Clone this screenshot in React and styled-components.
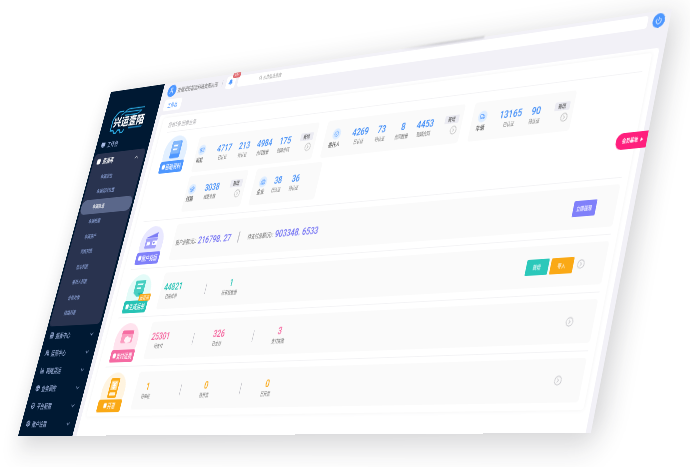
import React, { useEffect, useState } from "react";
import styled, { createGlobalStyle } from "styled-components";
import {
  User, Bell, Power, ChevronUp, ChevronDown, CircleChevronRight, Monitor, Database,
  FileText, Users, Truck, ShieldCheck, Settings, IdCard, Building2, Container, BadgeCheck,
  Search, BarChart3, Package,
} from "lucide-react";

const Global = createGlobalStyle`
  html, body { margin: 0; background: #fff; }
  * { box-sizing: border-box; }
  button, input { font: inherit; border: 0; margin: 0; padding: 0; background: none; color: inherit; }
  button { cursor: pointer; white-space: nowrap; }
  a { color: inherit; text-decoration: none; }
`;

const BOARD_WIDTH = 1900;
const BOARD_HEIGHT = 930;
const BOARD_ZOOM = 0.5;
const SCENE_WIDTH = 690;
const CORNERS = [[111, 92], [672, 9], [591, 433], [18, 436]];

/* Projects the flat board onto the four corners of the tilted plane. */
function projection(corners, scale) {
  const [[x0, y0], [x1, y1], [x2, y2], [x3, y3]] = corners.map(([x, y]) => [x * scale, y * scale]);
  const dx1 = x1 - x2, dx2 = x3 - x2, sx = x0 - x1 + x2 - x3;
  const dy1 = y1 - y2, dy2 = y3 - y2, sy = y0 - y1 + y2 - y3;
  const den = dx1 * dy2 - dx2 * dy1;
  const g = (sx * dy2 - dx2 * sy) / den;
  const h = (dx1 * sy - sx * dy1) / den;
  const w = BOARD_WIDTH * BOARD_ZOOM, t = BOARD_HEIGHT * BOARD_ZOOM;
  const m = [
    (x1 - x0 + g * x1) / w, (y1 - y0 + g * y1) / w, 0, g / w,
    (x3 - x0 + h * x3) / t, (y3 - y0 + h * y3) / t, 0, h / t,
    0, 0, 1, 0,
    x0, y0, 0, 1,
  ];
  return `matrix3d(${m.join(",")})`;
}

const Scene = styled.div`
  width: 100%;
  aspect-ratio: 690 / 467;
  overflow: hidden;
  background: #fff;
`;
const Plane = styled.div`
  width: max-content;
  transform-origin: 0 0;
`;
const Board = styled.div`
  zoom: ${BOARD_ZOOM};
  width: ${BOARD_WIDTH}px;
  height: ${BOARD_HEIGHT}px;
  display: flex;
  position: relative;
  background: #f2f1f7;
  font-family: "Noto Sans CJK SC", "Noto Sans", sans-serif;
  font-size: 14px;
  line-height: 20px;
  color: #666;
  box-shadow: 16px 18px 70px rgba(30, 34, 40, 0.22);
`;

/* Sidebar */
const Sidebar = styled.nav`
  flex: none;
  width: 220px;
  background: #001933;
  color: #a9bce6;
  display: flex;
  flex-direction: column;
`;
const Brand = styled.div`
  height: 129px;
  padding: 48px 0 0 36px;
`;
const MenuItem = styled.button`
  width: 100%;
  height: 46px;
  display: flex;
  align-items: center;
  gap: 8px;
  padding: 0 20px 0 ${(p) => (p.$inset ? 14 : 20)}px;
  font-size: 15px;
  font-weight: ${(p) => (p.$inset ? 700 : 500)};
  color: ${(p) => (p.$inset ? "#fff" : "inherit")};
  svg:last-child:not(:first-child) { margin-left: auto; }
`;
const SubMenu = styled.div`
  margin: 0 8px 2px 6px;
  padding-bottom: 13px;
  border-radius: 12px;
  background: #29334f;
`;
const SubItem = styled.a`
  display: flex;
  align-items: center;
  height: 41px;
  padding-left: 48px;
  border-radius: 18px;
  font-size: 12px;
  font-weight: 500;
  color: ${(p) => (p.$active ? "#fff" : "#8fa6dc")};
  background: ${(p) => (p.$active ? "#5a678a" : "transparent")};
`;

/* Header */
const Main = styled.div`
  flex: 1;
  min-width: 0;
  display: flex;
  flex-direction: column;
  padding: 0 14px 0 16px;
`;
const Header = styled.header`
  height: 44px;
  display: flex;
  align-items: center;
  padding: 0 0 0 3px;
`;
const RoundButton = styled.button`
  flex: none;
  width: 34px;
  height: 34px;
  border-radius: 50%;
  display: grid;
  place-items: center;
  background: #4e97ff;
  color: #fff;
`;
const Company = styled.span`
  margin-left: 7px;
  font-size: 13px;
  color: #666;
  white-space: nowrap;
`;
const HeaderRule = styled.i`
  width: 1px;
  height: 16px;
  margin: 0 15px;
  background: #d4d4dc;
`;
const BellButton = styled.button`
  position: relative;
  flex: none;
  width: 34px;
  height: 34px;
  border-radius: 6px;
  display: grid;
  place-items: center;
  background: #fff;
  color: #4e97ff;
`;
const Badge = styled.span`
  position: absolute;
  top: -8px;
  right: -14px;
  padding: 0 4px;
  border-radius: 4px;
  background: #e0696f;
  color: #fff;
  font-size: 11px;
  line-height: 15px;
`;
const SearchBox = styled.label`
  flex: 1;
  height: 30px;
  margin: 0 14px 0 11px;
  padding-left: 78px;
  border-radius: 8px;
  background: #fff;
  display: flex;
  align-items: center;
  gap: 4px;
  font-size: 11px;
  color: #888;
  input { flex: 1; outline: 0; }
  input::placeholder { color: #888; opacity: 1; }
`;
const Tabs = styled.div`
  height: 44px;
  padding: 2px 0 0 4px;
`;
const Tab = styled.button`
  width: 68px;
  height: 32px;
  border-radius: 8px;
  background: #fff;
  color: #4e97ff;
  font-size: 13px;
  font-weight: 500;
`;

/* Content */
const Content = styled.main`
  flex: 1;
  padding: 10px 18px 0 18px;
  border-radius: 8px 8px 0 0;
  background: #fff;
`;
const Panel = styled.div`
  padding: 0 18px 0 25px;
  border-radius: 8px;
  box-shadow: 0 0 10px rgba(80, 80, 100, 0.07);
`;
const Notice = styled.p`
  margin: 0;
  height: 40px;
  line-height: 40px;
  color: #a5a5aa;
`;
const Section = styled.section`
  display: flex;
  gap: 30px;
  min-height: 126px;
  border-top: 2px solid #f3f3f5;
  padding: ${(p) => (p.$tall ? "24px 0 17px" : "14px 0 16px")};
`;
const Emblem = styled.div`
  flex: none;
  width: 108px;
  margin-top: ${(p) => (p.$tall ? -12 : 0)}px;
  margin-bottom: -12px;
  display: flex;
  flex-direction: column;
  align-items: center;
`;
const Disc = styled.div`
  position: relative;
  width: 88px;
  height: 84px;
  border-radius: 44px 44px 30px 30px;
  display: grid;
  place-items: center;
  padding-bottom: 8px;
  background: ${(p) => p.$tint};
`;
const EmblemLabel = styled.button`
  position: relative;
  width: 90px;
  height: 32px;
  margin-top: -17px;
  display: flex;
  align-items: center;
  justify-content: center;
  gap: 2px;
  border-radius: 6px;
  background: ${(p) => p.$color};
  color: #fff;
  font-size: 15px;
  font-weight: 500;
`;
const Ribbon = styled.span`
  position: absolute;
  z-index: 1;
  right: -6px;
  bottom: 14px;
  padding: 0 3px;
  border-radius: 4px;
  background: #faa819;
  color: #fff;
  font-size: 12px;
  line-height: 18px;
`;
const Cards = styled.div`
  flex: 1;
  display: flex;
  flex-direction: column;
  gap: 9px;
`;
const CardRow = styled.div`
  display: flex;
  gap: 30px;
`;
const Card = styled.article`
  width: ${(p) => p.$width}px;
  height: 94px;
  display: flex;
  align-items: center;
  padding: 0 12px 0 ${(p) => p.$inset}px;
  border-radius: 8px;
  background: #fafafa;
`;
const Lead = styled.div`
  flex: none;
  width: 44px;
  margin-right: ${(p) => p.$gap}px;
  display: flex;
  flex-direction: column;
  align-items: center;
  gap: 1px;
  font-size: 13px;
  color: #333;
  white-space: nowrap;
`;
const LeadIcon = styled.span`
  width: 28px;
  height: 28px;
  border-radius: 50%;
  display: grid;
  place-items: center;
  background: #deedff;
  color: #4e97ff;
`;
const Stat = styled.div`
  flex: none;
  width: ${(p) => p.$width}px;
  text-align: center;
  font-size: 11px;
  line-height: 20px;
  color: #666;
  white-space: nowrap;
`;
const Figure = styled.strong`
  display: block;
  font: 500 24px/28px Roboto, sans-serif;
  color: ${(p) => p.$color};
`;
const CardTools = styled.div`
  margin-left: auto;
  display: flex;
  flex-direction: column;
  align-items: flex-end;
  gap: 6px;
  color: #aaa;
`;
const Tag = styled.button`
  width: 43px;
  height: 20px;
  border-radius: 3px;
  background: #ebebf2;
  color: #444;
  font-size: 11px;
  font-weight: 500;
`;
const Strip = styled.div`
  flex: 1;
  height: 94px;
  display: flex;
  align-items: center;
  padding: 0 57px 0 ${(p) => (p.$inset ? 12 : 0)}px;
  border-radius: 8px;
  background: #fafafa;
`;
const Bar = styled.i`
  width: 3px;
  height: 28px;
  margin: ${(p) => (p.$tight ? "0 32px 0 26px" : "0 43px 0 76px")};
  background: #c4c4ca;
`;
const Amount = styled.div`
  display: flex;
  align-items: center;
  gap: 6px;
  white-space: nowrap;
  font-size: 13px;
`;
const Tools = styled.div`
  margin-left: auto;
  display: flex;
  align-items: center;
  gap: 6px;
  color: #b4b4ba;
`;
const Action = styled.button`
  width: 64px;
  height: 36px;
  border-radius: 3px;
  background: ${(p) => p.$color};
  color: #fff;
  font-size: 11px;
  font-weight: 500;
`;
const IconButton = styled.button`
  display: grid;
  margin-left: 4px;
`;
const SideFlag = styled.button`
  position: absolute;
  right: 0;
  top: 278px;
  width: 86px;
  height: 37px;
  display: flex;
  align-items: center;
  justify-content: center;
  gap: 7px;
  padding-left: 6px;
  border-radius: 18px 0 0 18px;
  background: #ff1f7d;
  color: #fff;
  font-size: 11px;
  font-weight: 700;
`;
const TopShade = styled.i`
  position: absolute;
  left: 1080px;
  top: -3px;
  width: 270px;
  height: 7px;
  background: linear-gradient(90deg, rgba(120, 120, 125, 0), rgba(120, 120, 125, 0.3) 50%, rgba(120, 120, 125, 0.25));
  filter: blur(2px);
`;

const Logo = () => (
  <svg width="150" height="80" viewBox="0 0 150 80" role="img" aria-label="兴运壹陌">
    <g fill="none" stroke="#2aa6dc" strokeWidth="4" strokeLinejoin="round">
      <path d="M18 66H6V40q0-6 5-12l9-10q4-4 9-4h14" />
      <path d="M18 66l5 8h8l5-8h8l5 8h8l5-8" />
      <path d="M36 24q8-2 14-8t14-7h62M46 17h70q-10 9-22 9H50" strokeWidth="3" />
    </g>
    <path d="M78 61h56l-4 4H78z" fill="#1b7fb8" />
    <text x="12" y="55" fill="#fff" fontSize="31" fontWeight="900" fontFamily="'Noto Sans CJK SC', sans-serif">兴运壹陌</text>
  </svg>
);

const LibraryArt = () => (
  <svg width="46" height="52" viewBox="0 0 46 52" aria-hidden="true">
    <path d="M13 2h26q5 0 5 5v33H18V7q0-5-5-5z" fill="#6baaff" />
    <path d="M6 6q0-4 5-4h22q5 0 5 5v41H11q-5 0-5-5z" fill="#82b7fb" />
    <path d="M14 15h16M14 25h16" stroke="#fff" strokeWidth="4" />
    <path d="M6 37h38v8q0 4-5 4H11q-5 0-5-5z" fill="#4e97ff" />
  </svg>
);
const WalletArt = () => (
  <svg width="54" height="46" viewBox="0 0 54 46" aria-hidden="true">
    <path d="M4 14L46 1v13z" fill="#7d7cf5" />
    <path d="M4 15h44v28H9q-5 0-5-5z" fill="#a3a1fa" />
    <path d="M10 25h12v9H10zM31 23h18v11H31z" fill="#fff" />
    <circle cx="37" cy="28" r="3" fill="#7d7cf5" />
  </svg>
);
const WaybillArt = () => (
  <svg width="46" height="50" viewBox="0 0 46 50" aria-hidden="true">
    <path d="M4 2h38v32L30 44H19L4 34z" fill="#48cfc1" />
    <path d="M12 12h22M12 22h16" stroke="#e3fbf8" strokeWidth="4" />
    <path d="M20 34l14 12 8-12z" fill="#23b9ab" />
  </svg>
);
const PayArt = () => (
  <svg width="52" height="46" viewBox="0 0 52 46" aria-hidden="true">
    <rect x="4" y="3" width="44" height="32" rx="5" fill="#fb9cc0" />
    <path d="M4 12V8q0-5 5-5h34q5 0 5 5v4z" fill="#f66ca2" />
    <path d="M18 22l10-5 5 4h9v11l-15 4-9-6z" fill="#fff2f7" />
  </svg>
);
const InvoiceArt = () => (
  <svg width="38" height="54" viewBox="0 0 38 54" aria-hidden="true">
    <rect x="2" y="2" width="34" height="50" rx="4" fill="#faa916" />
    <rect x="7" y="9" width="24" height="23" fill="#ffdf9d" />
    <path d="M13 12l6 7 6-7M19 19v11M13 21h12M13 26h12" fill="none" stroke="#fff" strokeWidth="3" />
    <path d="M8 38h22v8H8z" fill="#fff3d7" />
  </svg>
);
const PlayMark = () => (
  <svg width="7" height="9" viewBox="0 0 7 9" aria-hidden="true"><path d="M0 0l7 4.5L0 9z" fill="#fff" /></svg>
);

const SUB_ITEMS = ["车辆定位", "车辆实时位置", "车辆轨迹", "车辆档案", "车辆资产", "司机列表", "挂车列表", "委托人列表", "合作对象", "线路列表"];
const GROUPS = [
  [FileText, "报表中心"], [Users, "运营中心"], [BarChart3, "网络货运"],
  [Package, "业务调控"], [ShieldCheck, "平台配置"], [Settings, "账户设置"],
];
const CARD_ROWS = [
  [
    { name: "司机", icon: IdCard, width: 438, inset: 0, gap: 27, column: 74, add: true,
      stats: [["4717", "已认证"], ["213", "待认证"], ["4984", "合同数量"], ["175", "到期合同"]] },
    { name: "委托人", icon: BadgeCheck, width: 452, inset: 18, gap: 25, column: 71, add: true,
      stats: [["4269", "已认证"], ["73", "待认证"], ["8", "合同数量"], ["4453", "到期合同"]] },
    { name: "车辆", icon: Truck, width: 304, inset: 10, gap: 27, column: 76, add: true,
      stats: [["13165", "已认证"], ["90", "待认证"]] },
  ],
  [
    { name: "线路", icon: Container, width: 220, inset: 0, gap: 27, column: 52, add: true,
      stats: [["3038", "线路条数"]] },
    { name: "企业", icon: Building2, width: 232, inset: 12, gap: 2, column: 62, add: false,
      stats: [["38", "已认证"], ["36", "待认证"]] },
  ],
];
const BLUE = "#3f8cf7";

function SummaryCard({ card }) {
  const Icon = card.icon;
  return (
    <Card $width={card.width} $inset={card.inset}>
      <Lead $gap={card.gap}>
        <LeadIcon><Icon size={16} strokeWidth={2} /></LeadIcon>
        {card.name}
      </Lead>
      {card.stats.map(([value, label]) => (
        <Stat key={value} $width={card.column}><Figure $color={BLUE}>{value}</Figure>{label}</Stat>
      ))}
      {card.add && (
        <CardTools>
          <Tag>新增</Tag>
          <IconButton aria-label="查看"><CircleChevronRight size={22} strokeWidth={1.5} /></IconButton>
        </CardTools>
      )}
    </Card>
  );
}

function EmblemBlock({ tint, color, label, art, ribbon, tall }) {
  return (
    <Emblem $tall={tall}>
      <Disc $tint={tint}>{art}{ribbon && <Ribbon>{ribbon}</Ribbon>}</Disc>
      <EmblemLabel $color={color}><Database size={14} fill="#fff" strokeWidth={1} />{label}</EmblemLabel>
    </Emblem>
  );
}

function StatStrip({ stats, color, children }) {
  return (
    <Strip>
      {stats.map(([value, label], i) => (
        <React.Fragment key={label}>
          {i > 0 && <Bar />}
          <Stat $width={92}><Figure $color={color}>{value}</Figure>{label}</Stat>
        </React.Fragment>
      ))}
      <Tools>
        {children}
        <IconButton aria-label="查看"><CircleChevronRight size={22} strokeWidth={1.5} /></IconButton>
      </Tools>
    </Strip>
  );
}

function useSceneScale() {
  const read = () => document.documentElement.clientWidth / SCENE_WIDTH;
  const [scale, setScale] = useState(read);
  useEffect(() => {
    const update = () => setScale(read());
    window.addEventListener("resize", update);
    return () => window.removeEventListener("resize", update);
  }, []);
  return scale;
}

export default function App() {
  const scale = useSceneScale();
  return (
    <Scene>
      <Global />
      <Plane style={{ transform: projection(CORNERS, scale) }}>
        <Board>
          <Sidebar>
            <Brand><Logo /></Brand>
            <MenuItem><Monitor size={17} fill="#a9bce6" />工作台</MenuItem>
            <SubMenu>
              <MenuItem $inset><Database size={17} fill="#fff" />资源库<ChevronUp size={20} /></MenuItem>
              {SUB_ITEMS.map((name, i) => <SubItem key={name} href="#" $active={i === 2}>{name}</SubItem>)}
            </SubMenu>
            {GROUPS.map(([Icon, name]) => (
              <MenuItem key={name}><Icon size={17} strokeWidth={3} />{name}<ChevronDown size={20} /></MenuItem>
            ))}
          </Sidebar>
          <Main>
            <Header>
              <RoundButton aria-label="账户"><User size={20} /></RoundButton>
              <Company>安徽消防智运科技有限公司</Company>
              <HeaderRule />
              <BellButton aria-label="消息"><Bell size={17} fill="#4e97ff" /><Badge>99+</Badge></BellButton>
              <SearchBox><Search size={12} /><input aria-label="搜索" placeholder="公告信息查询" /></SearchBox>
              <RoundButton aria-label="退出"><Power size={18} strokeWidth={2.5} /></RoundButton>
            </Header>
            <Tabs><Tab>工作台</Tab></Tabs>
            <Content>
              <Panel>
                <Notice>您有5条 回单业务</Notice>
                <Section $tall>
                  <EmblemBlock tall tint="#e3f0ff" color="#4e97ff" label="基础资料" art={<LibraryArt />} />
                  <Cards>
                    {CARD_ROWS.map((row, i) => (
                      <CardRow key={i}>{row.map((card) => <SummaryCard key={card.name} card={card} />)}</CardRow>
                    ))}
                  </Cards>
                </Section>
                <Section>
                  <EmblemBlock tint="#e9e8ff" color="#8080fa" label="账户充值" art={<WalletArt />} />
                  <Strip $inset>
                    <Amount>账户余额(元): <Figure $color="#7574f4">216798. 27</Figure></Amount>
                    <Bar $tight />
                    <Amount>待支付总额(元): <Figure $color="#7574f4">903348. 6533</Figure></Amount>
                    <Tools><Action $color="#8080fa">立即提现</Action></Tools>
                  </Strip>
                </Section>
                <Section>
                  <EmblemBlock tint="#e3fbf8" color="#27c3b5" label="生成运单" ribbon="运营商" art={<WaybillArt />} />
                  <StatStrip color="#27c3b5" stats={[["44821", "已完成单"], ["1", "待审核数量"]]}>
                    <Action $color="#2bc8ba">新增</Action>
                    <Action $color="#faa916">导入</Action>
                  </StatStrip>
                </Section>
                <Section>
                  <EmblemBlock tint="#ffe3ee" color="#f56ba3" label="支付运费" art={<PayArt />} />
                  <StatStrip color="#f5629c" stats={[["25301", "待支付"], ["326", "已支付"], ["3", "支付失败"]]} />
                </Section>
                <Section>
                  <EmblemBlock tint="#fff4e0" color="#faa916" label="开票" art={<InvoiceArt />} />
                  <StatStrip color="#faa916" stats={[["1", "待审核"], ["0", "待开票"], ["0", "已开票"]]} />
                </Section>
              </Panel>
            </Content>
          </Main>
          <SideFlag>会员基地<PlayMark /></SideFlag>
          <TopShade />
        </Board>
      </Plane>
    </Scene>
  );
}
